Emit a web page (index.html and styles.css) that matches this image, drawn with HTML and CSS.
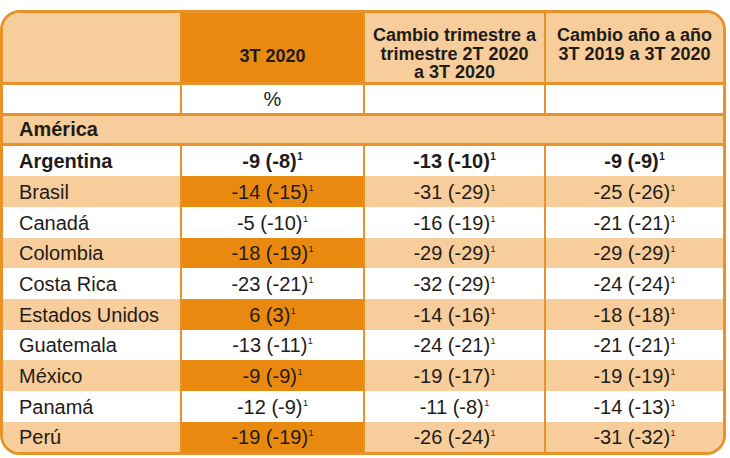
FILE: index.html
```html
<!DOCTYPE html>
<html lang="es">
<head>
<meta charset="utf-8">
<link rel="stylesheet" href="styles.css">
</head>
<body>
<div class="frame">
<table class="t">
  <thead>
    <tr class="head">
      <th class="c1 peach"></th>
      <th class="c2 dark mid">3T 2020</th>
      <th class="c3 peach">Cambio trimestre a<br>trimestre 2T 2020<br>a 3T 2020</th>
      <th class="c4 peach">Cambio año a año<br>3T 2019 a 3T 2020</th>
    </tr>
  </thead>
  <tbody>
    <tr class="unit">
      <td></td><td class="v">%</td><td class="v"></td><td class="v"></td>
    </tr>
    <tr class="region">
      <td colspan="4">América</td>
    </tr>
    <tr class="row bold">
      <td class="name">Argentina</td><td class="v">-9 (-8)<sup>1</sup></td><td class="v">-13 (-10)<sup>1</sup></td><td class="v">-9 (-9)<sup>1</sup></td>
    </tr>
    <tr class="row alt">
      <td class="name">Brasil</td><td class="v dark">-14 (-15)<sup>1</sup></td><td class="v">-31 (-29)<sup>1</sup></td><td class="v">-25 (-26)<sup>1</sup></td>
    </tr>
    <tr class="row">
      <td class="name">Canadá</td><td class="v">-5 (-10)<sup>1</sup></td><td class="v">-16 (-19)<sup>1</sup></td><td class="v">-21 (-21)<sup>1</sup></td>
    </tr>
    <tr class="row alt">
      <td class="name">Colombia</td><td class="v dark">-18 (-19)<sup>1</sup></td><td class="v">-29 (-29)<sup>1</sup></td><td class="v">-29 (-29)<sup>1</sup></td>
    </tr>
    <tr class="row">
      <td class="name">Costa Rica</td><td class="v">-23 (-21)<sup>1</sup></td><td class="v">-32 (-29)<sup>1</sup></td><td class="v">-24 (-24)<sup>1</sup></td>
    </tr>
    <tr class="row alt">
      <td class="name">Estados Unidos</td><td class="v dark">6 (3)<sup>1</sup></td><td class="v">-14 (-16)<sup>1</sup></td><td class="v">-18 (-18)<sup>1</sup></td>
    </tr>
    <tr class="row">
      <td class="name">Guatemala</td><td class="v">-13 (-11)<sup>1</sup></td><td class="v">-24 (-21)<sup>1</sup></td><td class="v">-21 (-21)<sup>1</sup></td>
    </tr>
    <tr class="row alt">
      <td class="name">México</td><td class="v dark">-9 (-9)<sup>1</sup></td><td class="v">-19 (-17)<sup>1</sup></td><td class="v">-19 (-19)<sup>1</sup></td>
    </tr>
    <tr class="row">
      <td class="name">Panamá</td><td class="v">-12 (-9)<sup>1</sup></td><td class="v">-11 (-8)<sup>1</sup></td><td class="v">-14 (-13)<sup>1</sup></td>
    </tr>
    <tr class="row alt">
      <td class="name">Perú</td><td class="v dark">-19 (-19)<sup>1</sup></td><td class="v">-26 (-24)<sup>1</sup></td><td class="v">-31 (-32)<sup>1</sup></td>
    </tr>
  </tbody>
</table>
</div>
</body>
</html>
```

FILE: styles.css
```css
html, body {
  margin: 0;
  padding: 0;
  background: #ffffff;
}
body {
  padding-top: 10px;
  font-family: "Liberation Sans", Arial, sans-serif;
  color: #1f1b19;
}
.frame {
  width: 720px;
  border: 3px solid #e8922a;
  border-radius: 20px;
  overflow: hidden;
  background: #ffffff;
}
.t {
  width: 720px;
  table-layout: fixed;
  border-collapse: separate;
  border-spacing: 0;
}
.t th, .t td {
  box-sizing: border-box;
  padding: 0;
  text-align: center;
}
.t td + td, .t th + th {
  border-left: 2px solid #e8922a;
}
.c1 { width: 177px; }
.c2 { width: 183px; }
.c3 { width: 181px; }
.c4 { width: 179px; }

.peach { background: #f7ce9b; }
.dark { background: #e9890f; }

.head th {
  font-size: 18px;
  font-weight: bold;
  line-height: 18.5px;
  padding: 13px 2px 0;
  vertical-align: top;
  border-bottom: 3px solid #e8922a;
}
.head th.mid {
  vertical-align: middle;
  padding-top: 17px;
}

.unit td {
  height: 31px;
  font-size: 20px;
  line-height: 28px;
  border-bottom: 3px solid #e8922a;
  background: #ffffff;
}

.region td {
  height: 30px;
  background: #f7ce9b;
  font-size: 20px;
  font-weight: bold;
  line-height: 27px;
  text-align: left;
  padding-left: 16px;
  border-bottom: 3px solid #e8922a;
}

.row td {
  height: 30.7px;
  font-size: 20px;
  line-height: 29px;
  padding-top: 1.7px;
  white-space: nowrap;
  background: #ffffff;
}
.row.alt td { background: #f7ce9b; }
.row.alt td.dark { background: #e9890f; }
.row td.name {
  text-align: left;
  padding-left: 16px;
}
.row.bold td {
  font-weight: bold;
  line-height: 30.7px;
  padding-top: 0;
}
.row sup {
  font-size: 9px;
  line-height: 0;
  vertical-align: 8px;
  margin-left: 0.5px;
}
.row.bold sup {
  font-size: 10px;
}
```
